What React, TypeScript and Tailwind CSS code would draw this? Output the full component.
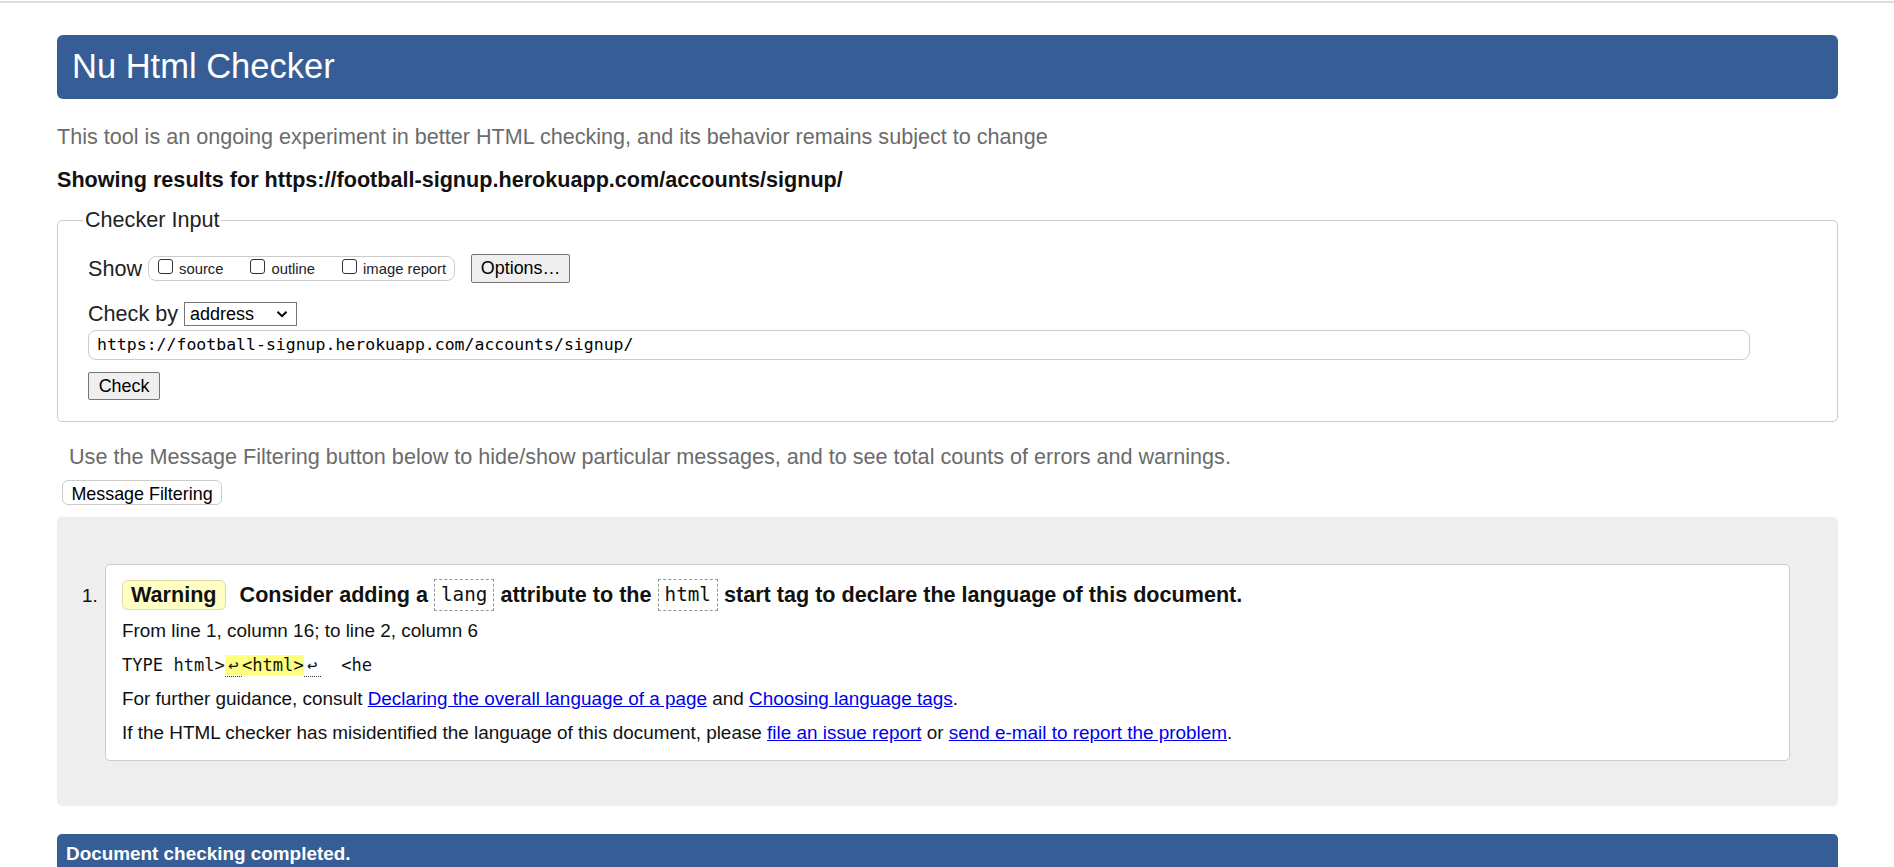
export default function App() {
  return (
    <div className="min-h-screen bg-white font-['Liberation_Sans',Arial,sans-serif] text-black">
      <div className="mt-[1px] h-[2px] bg-[#dcdcdc]" />

      <div className="pl-[57px] pr-[56px]">
        <h1 className="mt-[32px] flex h-[64px] items-center rounded-[6px] bg-[#365d95] pl-[15px] text-[34.5px] font-normal text-white">
          Nu Html Checker
        </h1>

        <p className="mt-[25px] text-[21.6px] leading-[26px] text-[#6b6b6b]">
          This tool is an ongoing experiment in better HTML checking, and its behavior remains subject to change
        </p>

        <p className="mt-[17px] text-[21.6px] font-bold leading-[26px] text-[#111]">
          Showing results for https://football-signup.herokuapp.com/accounts/signup/
        </p>

        <fieldset className="mt-[15px] rounded-[5px] border border-[#cccccc] pb-[21px] pl-[30px] pr-[87px]">
          <legend className="-ml-[5px] px-[2px] text-[21.6px] leading-[24px] text-[#222]">Checker Input</legend>

          <div className="mt-[22px] flex h-[29px] items-center">
            <span className="text-[21.6px] leading-[26px] text-[#222]">Show</span>
            <div className="ml-[6px] flex h-[25px] items-start gap-[27px] rounded-[8px] border border-[#cccccc] pl-[9px] pr-[8px]">
              {["source", "outline", "image report"].map((label) => (
                <div key={label} className="flex items-start gap-[6px]">
                  <span className="mt-[2px] h-[15px] w-[15px] rounded-[3px] border border-[#333] bg-white" />
                  <span className="mt-[5px] text-[14.8px] leading-[15px] text-[#222]">{label}</span>
                </div>
              ))}
            </div>
            <button className="ml-[16px] h-[29px] w-[99px] rounded-[2px] border border-[#767676] bg-[#efefef] text-[17.9px] text-black">
              Options…
            </button>
          </div>

          <div className="mt-[19px] flex h-[24px] items-center">
            <span className="text-[21.6px] leading-[26px] text-[#222]">Check by</span>
            <div className="ml-[6px] flex h-[24px] w-[113px] items-center justify-between border border-[#767676] pl-[5px] pr-[8px]">
              <span className="text-[18px] leading-[20px] text-black">address</span>
              <svg width="12" height="8" viewBox="0 0 12 8" className="text-black">
                <path d="M1.5 1.8 6 6.2 10.5 1.8" fill="none" stroke="currentColor" strokeWidth="2" />
              </svg>
            </div>
          </div>

          <div className="mt-[4px] flex h-[30px] w-full items-center rounded-[8px] border border-[#cccccc] pl-[8px]">
            <span className="font-['DejaVu_Sans_Mono',monospace] text-[16.5px] text-black">
              https://football-signup.herokuapp.com/accounts/signup/
            </span>
          </div>

          <button className="mt-[12px] h-[28px] w-[72px] rounded-[2px] border border-[#767676] bg-[#efefef] text-[17.9px] text-black">
            Check
          </button>
        </fieldset>

        <p className="mt-[22px] pl-[12px] text-[21.6px] leading-[26px] text-[#6b6b6b]">
          Use the Message Filtering button below to hide/show particular messages, and to see total counts of errors and warnings.
        </p>

        <button className="ml-[5px] mt-[10px] h-[25px] w-[160px] rounded-[6px] border border-[#cccccc] bg-white text-[17.9px] text-black">
          Message Filtering
        </button>

        <div className="mt-[10px] flex items-start rounded-[5px] bg-[#eeeeee] pb-[45px] pl-[25px] pr-[48px] pt-[47px]">
          <span className="mt-[21px] w-[23px] text-[18.9px] leading-[22px] text-[#111]">1.</span>

          <div className="flex-1 rounded-[5px] border border-[#cccccc] bg-white pb-[10px] pl-[16px] pt-[14px]">
            <div className="flex h-[32px] items-center text-[21.6px] font-bold text-[#111]">
              <span className="flex h-[30px] items-center rounded-[6px] border border-[#ddd8a4] bg-[#ffffc4] px-[8px]">Warning</span>
              <span className="ml-[14px] whitespace-pre">Consider adding a </span>
              <code className="flex h-[32px] items-center border border-dashed border-[#999] px-[6px] font-['DejaVu_Sans_Mono',monospace] text-[19.3px] font-normal">lang</code>
              <span className="whitespace-pre"> attribute to the </span>
              <code className="flex h-[32px] items-center border border-dashed border-[#999] px-[6px] font-['DejaVu_Sans_Mono',monospace] text-[19.3px] font-normal">html</code>
              <span className="whitespace-pre"> start tag to declare the language of this document.</span>
            </div>

            <p className="mt-[3px] text-[18.9px] leading-[34px] text-[#111]">From line 1, column 16; to line 2, column 6</p>

            <p className="whitespace-pre font-['DejaVu_Sans_Mono',monospace] text-[17.1px] leading-[34px] text-[#111]">
              TYPE html&gt;
              <span className="bg-[#ffff80]">
                <span className="inline-block w-[17px] border-b border-dotted border-[#333] text-center leading-[22px]">↩</span>&lt;html&gt;
              </span>
              <span className="inline-block w-[17px] border-b border-dotted border-[#333] text-center leading-[22px]">↩</span>  &lt;he
            </p>

            <p className="text-[18.9px] leading-[34px] text-[#111]">
              For further guidance, consult{" "}
              <a className="text-[#0000ee] underline">Declaring the overall language of a page</a> and{" "}
              <a className="text-[#0000ee] underline">Choosing language tags</a>.
            </p>

            <p className="text-[18.9px] leading-[34px] text-[#111]">
              If the HTML checker has misidentified the language of this document, please{" "}
              <a className="text-[#0000ee] underline">file an issue report</a> or{" "}
              <a className="text-[#0000ee] underline">send e-mail to report the problem</a>.
            </p>
          </div>
        </div>

        <div className="mt-[28px] h-[44px] rounded-t-[5px] bg-[#365d95] pl-[9px] pt-[9px] text-[18.9px] font-bold leading-[22px] text-white">
          Document checking completed.
        </div>
      </div>
    </div>
  );
}
